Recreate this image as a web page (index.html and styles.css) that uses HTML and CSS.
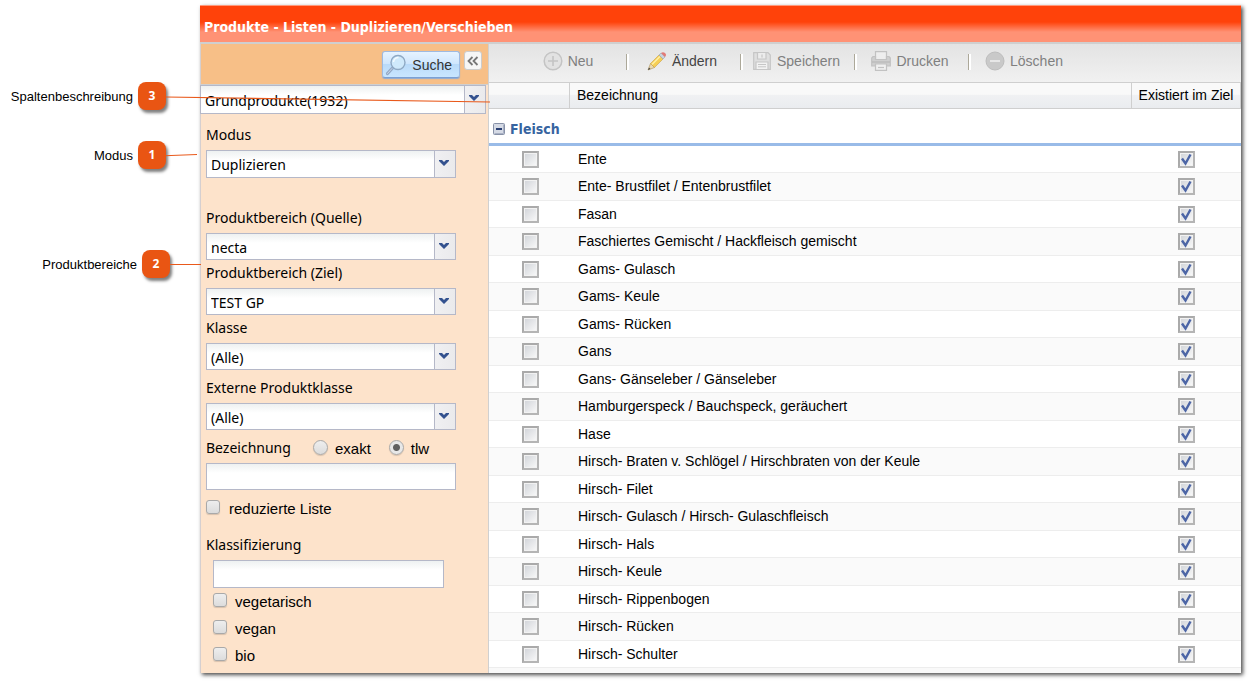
FILE: index.html
```
<!DOCTYPE html>
<html lang="de">
<head>
<meta charset="utf-8">
<title>Produkte - Listen - Duplizieren/Verschieben</title>
<link rel="stylesheet" href="styles.css">
</head>
<body>
<div class="page">
  <aside class="callouts">
    <div class="callout callout-columns"><span>Spaltenbeschreibung</span><b class="pin">3</b>
      <svg class="lead lead-long" width="324" height="10" viewBox="0 0 324 10"><path d="M0 2L324 7" stroke="#e9591b" stroke-width="1.2"/></svg></div>
    <div class="callout callout-mode"><span>Modus</span><b class="pin">1</b>
      <svg class="lead" width="31" height="10" viewBox="0 0 31 10"><path d="M0 5.7L31 4.5" stroke="#e9591b"/></svg></div>
    <div class="callout callout-areas"><span>Produktbereiche</span><b class="pin">2</b>
      <svg class="lead" width="31" height="10" viewBox="0 0 31 10"><path d="M0 5.5H31" stroke="#e9591b"/></svg></div>
  </aside>

  <div class="window">
    <h1 class="titlebar">Produkte - Listen - Duplizieren/Verschieben</h1>
    <div class="panes">
      <form class="sidebar">
        <div class="searchbar">
          <button type="button" class="search">
            <svg width="22" height="22" viewBox="0 0 22 22" fill="none"><path d="M7.500 14L2.500 19.500" stroke="#93a9c6" stroke-width="3.200" stroke-linecap="round"/><path d="M7 14.500L2.500 19.500" stroke="#c6d6ea" stroke-width="1" stroke-linecap="round"/><circle cx="13" cy="8.500" r="7" fill="#cfe9fb" stroke="#8fa9c4" stroke-width="1.400"/><path d="M8.500 8a5 5 0 0 1 5-4.500" stroke="#f4fbff" stroke-width="1.500"/></svg>
            Suche</button>
          <button type="button" class="collapse" aria-label="Einklappen">
            <svg width="12" height="10" viewBox="0 0 12 10" fill="none" stroke="#777" stroke-width="1.800"><path d="M5.500 1L1.500 5L5.500 9M10.500 1L6.500 5L10.500 9"/></svg></button>
        </div>
        <div class="combo combo-top">
          <select aria-label="Liste"><option>Grundprodukte(1932)</option></select>
          <span class="arrow"><svg width="12" height="8" viewBox="0 0 12 8"><path d="M1 1H4L6 3L8 1H11V2L6 7L1 2Z" fill="#34528f"/></svg></span>
        </div>
        <div class="fields">
          <label class="caption" for="mode">Modus</label>
          <div class="combo tall"><select id="mode"><option>Duplizieren</option></select>
            <span class="arrow"><svg width="12" height="8" viewBox="0 0 12 8"><path d="M1 1H4L6 3L8 1H11V2L6 7L1 2Z" fill="#34528f"/></svg></span></div>
          <label class="caption after-mode" for="source">Produktbereich (Quelle)</label>
          <div class="combo"><select id="source"><option>necta</option></select>
            <span class="arrow"><svg width="12" height="8" viewBox="0 0 12 8"><path d="M1 1H4L6 3L8 1H11V2L6 7L1 2Z" fill="#34528f"/></svg></span></div>
          <label class="caption close" for="target">Produktbereich (Ziel)</label>
          <div class="combo"><select id="target"><option>TEST GP</option></select>
            <span class="arrow"><svg width="12" height="8" viewBox="0 0 12 8"><path d="M1 1H4L6 3L8 1H11V2L6 7L1 2Z" fill="#34528f"/></svg></span></div>
          <label class="caption close" for="class">Klasse</label>
          <div class="combo"><select id="class"><option>(Alle)</option></select>
            <span class="arrow"><svg width="12" height="8" viewBox="0 0 12 8"><path d="M1 1H4L6 3L8 1H11V2L6 7L1 2Z" fill="#34528f"/></svg></span></div>
          <label class="caption spaced" for="extclass">Externe Produktklasse</label>
          <div class="combo"><select id="extclass"><option>(Alle)</option></select>
            <span class="arrow"><svg width="12" height="8" viewBox="0 0 12 8"><path d="M1 1H4L6 3L8 1H11V2L6 7L1 2Z" fill="#34528f"/></svg></span></div>
          <div class="name-row spaced">
            <label class="caption name-caption" for="name">Bezeichnung</label>
            <label class="choice exact"><input type="radio" name="match">exakt</label>
            <label class="choice"><input type="radio" name="match" checked>tlw</label>
          </div>
          <input class="text" id="name" type="text">
          <label class="choice reduced"><input type="checkbox">reduzierte Liste</label>
          <label class="caption classify" for="tags">Klassifizierung</label>
          <div class="tags">
            <input class="text tall" id="tags" type="text">
            <label class="choice"><input type="checkbox">vegetarisch</label>
            <label class="choice"><input type="checkbox">vegan</label>
            <label class="choice"><input type="checkbox">bio</label>
          </div>
        </div>
      </form>

      <main class="content">
        <div class="toolbar">
          <button type="button" class="tool" disabled><svg width="20" height="20" viewBox="0 0 20 20" fill="none" stroke="#c4c4c4"><circle cx="10" cy="10" r="8.800" stroke-width="1.500" fill="#e2e2e2"/><path d="M10 5V15M5 10H15" stroke-width="1.600"/></svg>Neu</button>
          <button type="button" class="tool"><svg width="20" height="20" viewBox="0 0 20 20"><path d="M1 19L3.500 12.500L7.500 16.500Z" fill="#ead9b0" stroke="#aa8d55" stroke-width=".6"/><path d="M1 19L2 16.500L3.500 18Z" fill="#444"/><path d="M3.500 12.500L12 4L16 8L7.500 16.500Z" fill="#f6cf55" stroke="#c9a04a" stroke-width=".6"/><path d="M5 13.500L13 5.500" stroke="#fff0a8" stroke-width="1.500"/><path d="M12 4L14 2L18 6L16 8Z" fill="#c9d3dd" stroke="#96a2ae" stroke-width=".6"/><path d="M14 2Q16 .3 18 2T18 6Z" fill="#e27a76"/></svg>Ändern</button>
          <button type="button" class="tool" disabled><svg width="20" height="20" viewBox="0 0 20 20" fill="none" stroke="#c6c6c6" stroke-width="1.200"><path d="M1.700 1.700H16L18.300 4V18.300H1.700Z" fill="#dfdfdf"/><path d="M5.500 2V8H14V2M10 3.500V6.500" fill="#ececec"/><path d="M4 18V11H16V18" fill="#f2f2f2"/><path d="M6 13.500H14M6 15.800H14" stroke-width="1"/></svg>Speichern</button>
          <button type="button" class="tool" disabled><svg width="20" height="20" viewBox="0 0 20 20" stroke="#c2c2c2" stroke-width="1.200"><path d="M4.500 8V.7H15.500V8" fill="#eee"/><path d="M2 5.500H4.500V8.500H15.500V5.500H18L19.300 7V15H.7V7Z" fill="#cfcfcf"/><path d="M1 11H19" stroke="#b8b8b8"/><path d="M4.500 13H15.500V19.300H4.500Z" fill="#f0f0f0"/><path d="M7 16.500H13"/></svg>Drucken</button>
          <button type="button" class="tool" disabled><svg width="20" height="20" viewBox="0 0 20 20"><circle cx="10" cy="10" r="9" fill="#c9c9c9" stroke="#bdbdbd"/><path d="M5 10H15" stroke="#f0f0f0" stroke-width="1.500"/></svg>Löschen</button>
        </div>
        <table class="grid">
          <thead><tr><th class="pick"></th><th>Bezeichnung</th><th class="exists">Existiert im Ziel</th></tr></thead>
          <tbody class="group"><tr><th colspan="3"><div class="group-title"><svg width="12" height="12" viewBox="0 0 12 12"><rect x=".5" y=".5" width="11" height="11" rx="1" fill="#d5dae5" stroke="#8791a7"/><path d="M1.500 10.500H10.500V1.500" fill="none" stroke="#a9b1c4"/><path d="M3 6H9" stroke="#283e72" stroke-width="2"/></svg>Fleisch</div></th></tr></tbody>
          <tbody class="rows" id="rows"></tbody>
        </table>
      </main>
    </div>
  </div>
</div>
<script src="rows.js"></script>
</body>
</html>
```
FILE: rows.js
```
const products = [
  "Ente", "Ente- Brustfilet / Entenbrustfilet", "Fasan",
  "Faschiertes Gemischt / Hackfleisch gemischt", "Gams- Gulasch", "Gams- Keule",
  "Gams- Rücken", "Gans", "Gans- Gänseleber / Gänseleber",
  "Hamburgerspeck / Bauchspeck, geräuchert", "Hase",
  "Hirsch- Braten v. Schlögel / Hirschbraten von der Keule", "Hirsch- Filet",
  "Hirsch- Gulasch / Hirsch- Gulaschfleisch", "Hirsch- Hals", "Hirsch- Keule",
  "Hirsch- Rippenbogen", "Hirsch- Rücken", "Hirsch- Schulter"
];
document.getElementById("rows").innerHTML = products.map((name, i) => `
  <tr>
    <td class="pick"><input type="checkbox" aria-labelledby="p${i}"></td>
    <td id="p${i}">${name}</td>
    <td class="exists"><label class="mark"><input type="checkbox" checked aria-label="${name} existiert im Ziel"><svg width="17" height="17" viewBox="0 0 17 17"><path d="M4 7.500L7.500 12.500L12.500 3.500" fill="none" stroke="#4c65a6" stroke-width="2.400"/></svg></label></td>
  </tr>`).join("");
```
FILE: styles.css
```
* { box-sizing: border-box; }
body {
  margin: 0;
  background: #fff;
  color: #000;
  font: 14px/20px "Liberation Sans", Arial, sans-serif;
}
button, input, select { font: inherit; color: inherit; margin: 0; }

.page {
  display: grid;
  grid-template-columns: 200px minmax(0, 1fr);
  padding: 5px 9px 9px 0;
}

/* Numbered notes beside the window */
.callouts { padding-top: 77px; font-size: 13px; }
.callout {
  position: relative;
  display: flex;
  align-items: center;
  justify-content: flex-end;
  gap: 5px;
  height: 28px;
  padding-right: 34px;
}
.callout span { padding-top: 2px; }
.callout-mode { margin-top: 31px; }
.callout-areas { margin-top: 81px; padding-right: 30px; }
.pin {
  width: 28px;
  height: 28px;
  border-radius: 8px;
  background: #e95513;
  box-shadow: 2px 3px 3px rgba(0, 0, 0, .5);
  color: #fff;
  font: bold 12px/28px "Noto Sans", sans-serif;
  text-align: center;
}
.lead { position: absolute; z-index: 2; left: 166px; top: 9px; }
.lead-long { top: 13px; }
.callout-areas .lead { left: 170px; }

/* Window */
.window { box-shadow: 2px 2px 4px rgba(0, 0, 0, .7); background: #fff; }
.titlebar {
  margin: 0;
  height: 39px;
  padding: 11px 4px 0;
  border-top: 1px solid #ff9a7c;
  border-bottom: 2px solid #cfcfcf;
  background: linear-gradient(#ff420a 16px, #ff9275 26px);
  color: #fff;
  font: bold 14px/20px "DejaVu Sans Condensed", "Noto Sans", sans-serif;
}
.panes { display: grid; grid-template-columns: 289px minmax(0, 1fr); }

/* Filter sidebar */
.sidebar {
  border-right: 1px solid #d0d0d0;
  border-left: 1px solid #d5cfd0;
  background: #fde3cb;
}
.searchbar {
  display: flex;
  justify-content: flex-end;
  align-items: flex-start;
  gap: 4px;
  height: 41px;
  padding: 7px 6px 0 0;
  border-bottom: 1px solid #cfcfcf;
  background: #f7bf87;
}
.search {
  display: flex;
  align-items: center;
  gap: 5px;
  height: 27px;
  padding: 0 7px 0 2px;
  border: 1px solid #9ebae1;
  border-bottom-color: #7ba0d4;
  border-radius: 3px;
  background: linear-gradient(#e6f3ff, #cde5fd 50%, #b9daf9 50%, #c9e6ff);
  box-shadow: 0 1px 1px #8cabd6;
  color: #333;
}
.collapse {
  display: grid;
  place-items: center;
  width: 18px;
  height: 19px;
  padding: 0;
  border: 1px solid #ccc;
  border-radius: 3px;
  background: #f6f6f6;
}
.fields {
  display: flex;
  flex-direction: column;
  padding: 11px 32px 7px 5px;
}
.caption, .combo { font-family: "Noto Sans", sans-serif; }
.caption { margin-bottom: 5px; white-space: nowrap; }
.after-mode { margin-top: 30px; }
.close { margin-top: 3px; }
.spaced { margin-top: 8px; }
.combo {
  position: relative;
  display: flex;
  height: 27px;
  border: 1px solid #b5b8c8;
  background: #fff;
}
.combo select {
  flex: 1;
  min-width: 0;
  padding: 2px 24px 0 4px;
  border: 0;
  border-radius: 0;
  appearance: none;
  background: linear-gradient(#eef1f1, #fff 9px);
}
.combo-top { height: 29px; margin-right: 2px; margin-left: -1px; }
.combo.tall, .text.tall { height: 28px; }
.arrow {
  position: absolute;
  inset: 0 0 0 auto;
  width: 21px;
  padding: 8px 2px 0 0;
  border-left: 1px solid #b5b8c8;
  background: linear-gradient(90deg, #f0f0f2, #eaeaec);
  line-height: 0;
  text-align: center;
  pointer-events: none;
}
.text {
  width: 100%;
  height: 27px;
  padding: 0 4px;
  border: 1px solid #b5b8c8;
  background: linear-gradient(#eef1f1, #fff 9px);
}
.name-row { display: flex; }
.name-caption { width: 107px; }
.exact { margin-right: 18px; }
.choice { display: flex; gap: 8px; font-size: 15px; line-height: 20px; height: 20px; }
.name-row .choice { gap: 7px; line-height: 22px; }
.choice input {
  flex: none;
  width: 14px;
  height: 14px;
  margin-top: 1px;
  appearance: none;
  border: 1px solid #a9a9a9;
  border-radius: 3px;
  background: linear-gradient(#eee, #dcdcdc);
  box-shadow: 0 1px 1px rgba(0, 0, 0, .15);
}
.choice input[type="radio"] { width: 15px; height: 15px; margin-top: 2px; border-radius: 50%; }
.choice input[type="radio"]:checked { background: radial-gradient(circle, #606060 3px, #e8e8e8 4px); }
.choice.reduced { gap: 9px; margin: 9px 0 16px; }
.tags { display: flex; flex-direction: column; gap: 7px; padding: 0 12px 0 7px; }
.tags .text { margin-bottom: -3px; }

/* Toolbar */
.content { background: #f9f9f9; }
.toolbar {
  display: flex;
  height: 39px;
  padding: 0 0 4px 24px;
  border-bottom: 1px solid #cfcfcf;
  background: linear-gradient(#e3e3e3, #f1f1f1);
}
.tool {
  position: relative;
  display: flex;
  align-items: center;
  justify-content: center;
  gap: 5px;
  width: 114px;
  padding: 0 4px 0 0;
  border: 0;
  background: none;
  color: #444;
}
.tool:disabled { color: #808080; }
.tool + .tool::before {
  content: "";
  position: absolute;
  left: -1px;
  top: 10px;
  width: 2px;
  height: 16px;
  border-left: 1px solid #aca899;
  background: #fff;
}

/* Product table */
.grid { width: 100%; border-spacing: 0; table-layout: fixed; background: #fff; }
.grid th { font-weight: normal; text-align: left; }
.grid thead th {
  height: 26px;
  padding: 0 7px 2px;
  border-right: 1px solid #cfcfcf;
  border-bottom: 1px solid #cfcfcf;
  background: linear-gradient(#f9f9f9 45%, #f0f1f3 50%, #eaecef);
  white-space: nowrap;
}
.grid .pick { width: 81px; }
.grid .exists { width: 109px; }
.grid thead .exists { padding: 0 0 2px; text-align: center; }
.group th { height: 37px; padding: 6px 4px 0; border-bottom: 3px solid #99bbe8; }
.group-title {
  display: flex;
  align-items: center;
  gap: 5px;
  color: #3764a0;
  font: bold 14px/20px "DejaVu Sans Condensed", "Noto Sans", sans-serif;
}
.rows td { height: 27px; padding: 0 0 1px 8px; border-bottom: 1px solid #ededed; line-height: 18px; }
.rows tr:nth-child(even) td { height: 28px; background: #fafafa; }
.rows .pick, .rows .exists { padding: 0; line-height: 0; text-align: center; }
.rows .pick { padding-left: 2px; }
.rows input {
  width: 17px;
  height: 17px;
  appearance: none;
  border: 2px solid #b3b3b3;
  border-color: #aaa #b5b5b5 #b5b5b5 #aaa;
  background: linear-gradient(135deg, #d0d3d8, #fafafa);
  box-shadow: inset 0 0 0 1px #f2f2f2;
  vertical-align: middle;
}
.mark { position: relative; display: inline-block; }
.mark svg { position: absolute; left: 0; top: 0; }
```
